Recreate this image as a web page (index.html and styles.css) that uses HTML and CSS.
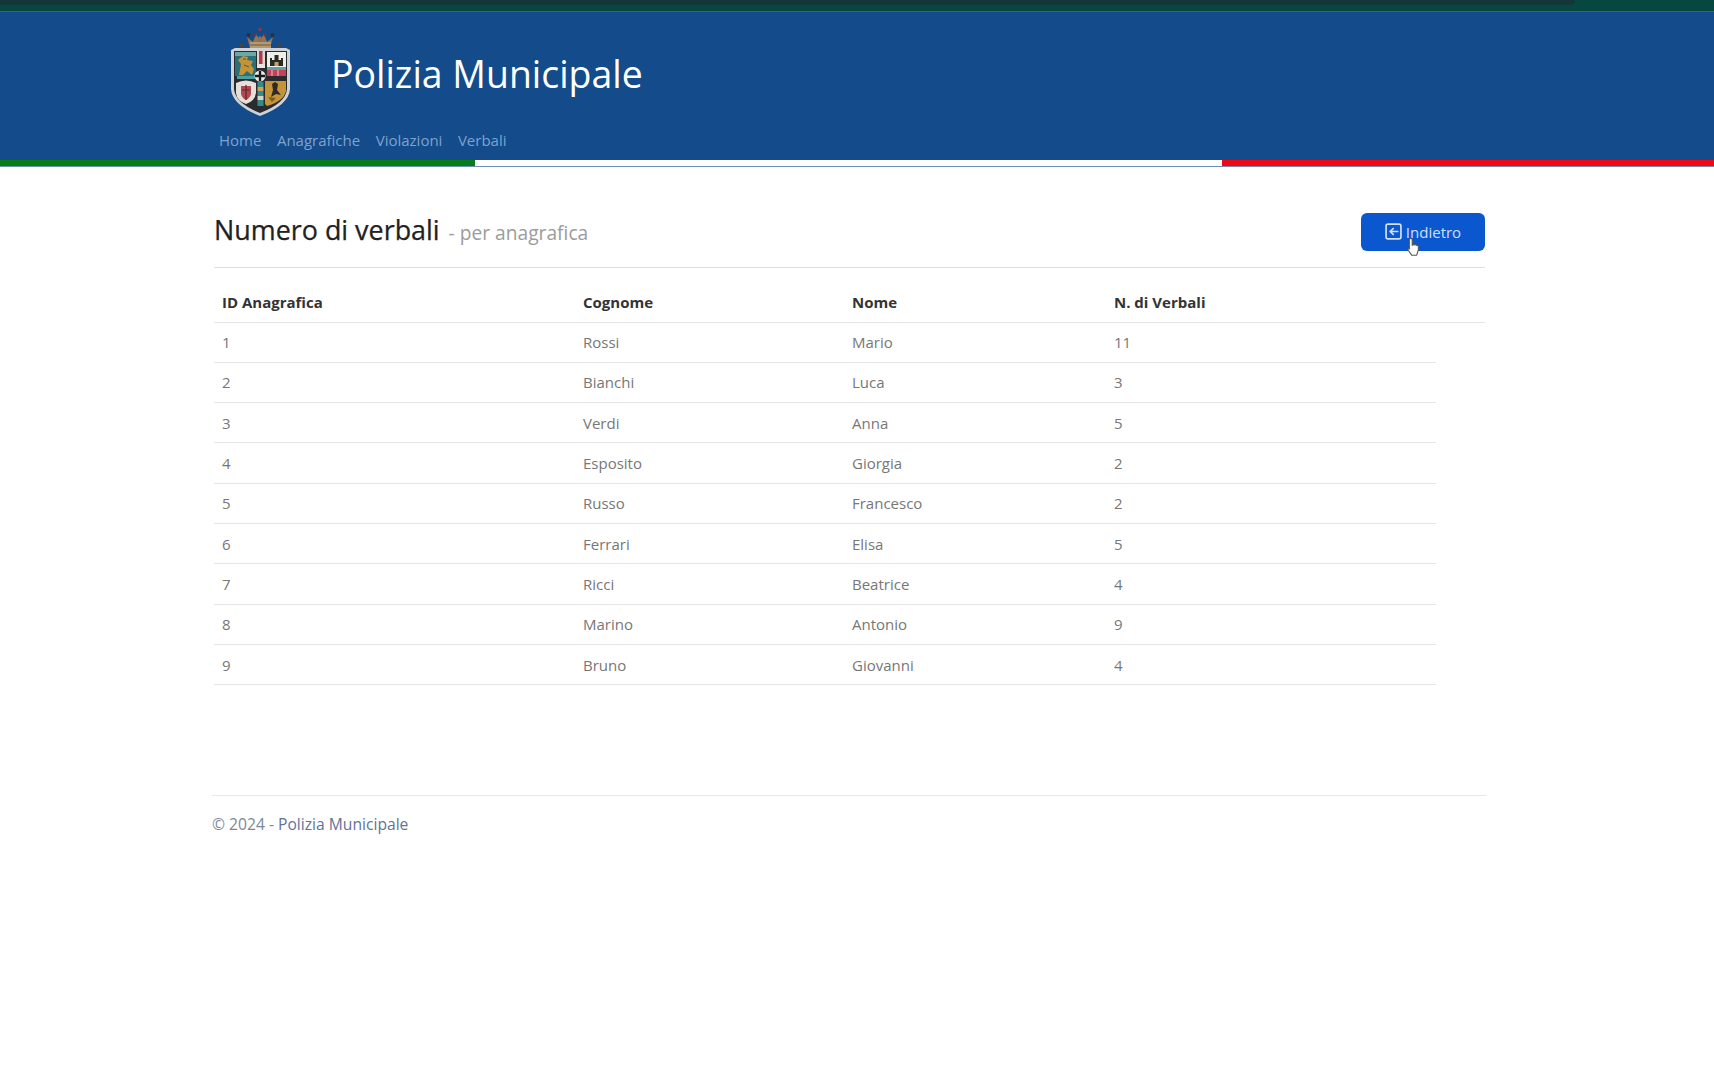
FILE: index.html
```html
<!DOCTYPE html>
<html lang="it">
<head>
<meta charset="utf-8">
<title>Polizia Municipale</title>
<link rel="stylesheet" href="styles.css">
</head>
<body>
<div class="browser-strip"><div class="strip-dark"></div></div>
<header class="site-header">
  <div class="brand">
    <svg class="crest" viewBox="20 5 62 90" width="62" height="90" aria-hidden="true">
      <!-- crown -->
      <path d="M40 27 L37 16 L43 21 L46 13 L50 19 L54 13 L57 21 L63 16 L60 27Z" fill="#8f7650"/>
      <path d="M48 18 Q50 12 52 18 L52 24 H48Z" fill="#8a6d62"/>
      <rect x="40" y="21" width="21" height="7" fill="#b59a70"/>
      <path d="M40 24 H61" stroke="#6e5a3e" stroke-width="1"/>
      <circle cx="50" cy="8.500" r="1.700" fill="#8c3a45"/>
      <circle cx="38.500" cy="14" r="2" fill="#2f3138"/><circle cx="62.500" cy="14" r="2" fill="#2f3138"/>
      <circle cx="45" cy="14" r="1.500" fill="#7d3040"/><circle cx="55" cy="14" r="1.500" fill="#7d3040"/>
      <circle cx="31.500" cy="24" r="2.200" fill="#47453f"/><circle cx="69" cy="24" r="2.200" fill="#47453f"/>
      <path d="M30 27 V30 M69 27 V30" stroke="#47453f" stroke-width="1.500"/>
      <!-- shield -->
      <path d="M21 29 L25 27 L76 27 L80 29 L80 68 Q79 84 50 95 Q22 84 21 68Z" fill="#cfd3d6"/>
      <path d="M24 30 L77 30 L77 68 Q76 82 50 92 Q25 82 24 68Z" fill="#2a2b2e"/>
      <!-- top-left: lion -->
      <rect x="25" y="31" width="21" height="24" fill="#2b6f78"/>
      <rect x="25" y="31" width="21" height="4" fill="#6aa7a8"/>
      <path d="M29 54 L31 43 L28 39 L33 35 L38 36 L37 39 L43 40 L41 44 L44 48 L42 54 L37 50 L33 54Z" fill="#c2943a"/>
      <path d="M33 38 L36 38 M34 44 L39 46" stroke="#6f5220" stroke-width="1"/>
      <!-- centre pale -->
      <rect x="47" y="30" width="8" height="17" fill="#dcd6d0"/><rect x="49" y="30" width="3.500" height="17" fill="#b23a48"/>
      <rect x="47" y="43" width="8" height="4" fill="#e8e4df"/>
      <!-- top-right: castle -->
      <rect x="57" y="31" width="19" height="15" fill="#efeee9"/>
      <path d="M60 45 V37 H62 V39 H64.500 V34 H68.500 V39 H71 V37 H73 V45Z" fill="#2b2a24"/>
      <rect x="64.500" y="41" width="4" height="4" fill="#b9a868"/>
      <rect x="57" y="46" width="19" height="3" fill="#5aa3a1"/>
      <rect x="57" y="49" width="19" height="6" fill="#c7405a"/>
      <path d="M62 49 V55 M68 49 V55" stroke="#e8c4c8" stroke-width="1"/>
      <!-- centre cross -->
      <rect x="27" y="55" width="18" height="3" fill="#49a0a0"/>
      <circle cx="50" cy="55" r="5.500" fill="#ecebe6"/><path d="M50 50 V60 M45 55 H55" stroke="#17191d" stroke-width="2.400"/>
      <!-- bottom-left shield -->
      <path d="M26 62 Q36 57 46 62 V72 Q45 80 36 83 Q27 80 26 72Z" fill="#e6e0da"/>
      <path d="M31 65 H41 V73 Q40 77 36 79 Q32 77 31 73Z" fill="#b04a50"/>
      <path d="M36 64 V79 M32 69 H40" stroke="#5a2a2c" stroke-width="1.200"/>
      <!-- bottom-right gold -->
      <path d="M55 60 H76 V70 Q74 80 57 85 L55 83Z" fill="#c4943a"/>
      <path d="M62 63 L65 61 L68 63 L67 69 L71 74 L66 73 L61 76 L63 69Z" fill="#2f2a20"/>
      <path d="M58 76 L66 77 L62 81Z" fill="#7e5a22"/>
      <!-- lower pale -->
      <rect x="47.500" y="61" width="6" height="5" fill="#38898c"/>
      <rect x="47.500" y="66" width="6" height="4" fill="#c9a552"/>
      <rect x="47.500" y="70" width="6" height="5" fill="#38898c"/>
      <rect x="47.500" y="75" width="6" height="4" fill="#d9d4c8"/>
      <rect x="47.500" y="79" width="6" height="6" fill="#38898c"/>
    </svg>
    <span class="brand-name">Polizia Municipale</span>
  </div>
  <nav class="main-nav">
    <a href="#">Home</a>
    <a href="#">Anagrafiche</a>
    <a href="#">Violazioni</a>
    <a href="#">Verbali</a>
  </nav>
</header>
<div class="tricolor"><span class="green"></span><span class="white"></span><span class="red"></span></div>

<main class="content">
  <div class="page-head">
    <h1>Numero di verbali <small>- per anagrafica</small></h1>
    <a class="btn" href="#">
      <svg class="btn-icon" viewBox="0 0 16 16" width="17" height="17" aria-hidden="true">
        <rect x="1" y="1" width="14" height="14" rx="1.800" fill="none" stroke="currentColor" stroke-width="1.600"/>
        <path d="M12 8H5M7.700 5.200 4.800 8l2.900 2.800" fill="none" stroke="currentColor" stroke-width="1.600" stroke-linecap="round" stroke-linejoin="round"/>
      </svg>
      <span>Indietro</span>
      <svg class="cursor" viewBox="0 0 16 22" width="15" height="20" aria-hidden="true">
        <path d="M5 1.500c1 0 1.600.7 1.600 1.600V9l1-.2c.4-.8 1.700-.7 2 .1.500-.6 1.700-.4 1.900.4.700-.3 1.700.1 1.800 1 .3 2.400.1 4.600-.8 6.500L11.500 20H6l-3.800-5.400c-.8-1.200.5-2.400 1.600-1.500l-.4-.3V3.100C3.400 2.200 4 1.500 5 1.500z" fill="#fff" stroke="#555" stroke-width="1.200" stroke-linejoin="round"/>
      </svg>
    </a>
  </div>

  <table class="data-table">
    <colgroup><col class="c1"><col class="c2"><col class="c3"><col class="c4"><col class="c5"></colgroup>
    <thead>
      <tr><th>ID Anagrafica</th><th>Cognome</th><th>Nome</th><th>N. di Verbali</th><th></th></tr>
    </thead>
    <tbody>
      <tr><td>1</td><td>Rossi</td><td>Mario</td><td>11</td></tr>
      <tr><td>2</td><td>Bianchi</td><td>Luca</td><td>3</td></tr>
      <tr><td>3</td><td>Verdi</td><td>Anna</td><td>5</td></tr>
      <tr><td>4</td><td>Esposito</td><td>Giorgia</td><td>2</td></tr>
      <tr><td>5</td><td>Russo</td><td>Francesco</td><td>2</td></tr>
      <tr><td>6</td><td>Ferrari</td><td>Elisa</td><td>5</td></tr>
      <tr><td>7</td><td>Ricci</td><td>Beatrice</td><td>4</td></tr>
      <tr><td>8</td><td>Marino</td><td>Antonio</td><td>9</td></tr>
      <tr><td>9</td><td>Bruno</td><td>Giovanni</td><td>4</td></tr>
    </tbody>
  </table>

  <footer class="site-footer">© 2024 - <span>Polizia Municipale</span></footer>
</main>
</body>
</html>
```

FILE: styles.css
```css
* { box-sizing: border-box; }
html, body { margin: 0; padding: 0; background: #fff; }
body {
  font-family: "Open Sans", "Noto Sans", "Liberation Sans", sans-serif;
  color: #666;
  font-size: 15px;
}
.browser-strip {
  height: 12px;
  background: #06483f;
  border-bottom: 1px solid #2a6a68;
}
.strip-dark {
  height: 5px;
  width: 1575px;
  background: #13363a;
  border-bottom-right-radius: 6px;
}
.site-header {
  background: #134b8b;
  height: 148px;
  padding: 14px 0 0 219px;
}
.brand { display: flex; align-items: center; height: 90px; padding-left: 11px; }
.crest { display: block; filter: blur(.4px); }
.brand-name {
  margin: 6px 0 0 39px;
  color: #fff;
  font-size: 37.400px;
  line-height: 1;
}
.main-nav { display: flex; gap: 15.500px; margin-top: 13px; }
.main-nav a { color: #7fa2cc; font-size: 15px; line-height: 22px; text-decoration: none; }
.tricolor { display: flex; height: 7px; border-bottom: 1px solid #6f8db5; }
.tricolor span { display: block; height: 6px; }
.tricolor .green { width: 475px; background: #067d18; }
.tricolor .white { width: 747px; background: #fff; }
.tricolor .red { flex: 1; background: #ee0a14; }

.content { width: 1274px; margin-left: 212px; padding-top: 46px; }
.page-head {
  display: flex;
  justify-content: space-between;
  align-items: center;
  margin: 0 1px 0 2px;
  height: 55px;
  padding-bottom: 17px;
  border-bottom: 1px solid #dedede;
}
h1 { margin: 0; font-size: 26.900px; font-weight: 400; color: #222; line-height: 38px; -webkit-text-stroke: .25px #222; }
h1 small { font-size: 19.200px; color: #9c9c9c; margin-left: 2px; -webkit-text-stroke: 0; }
.btn {
  position: relative;
  display: flex;
  align-items: center;
  justify-content: center;
  gap: 4px;
  width: 124px;
  height: 38px;
  background: #0b57d0;
  border-radius: 6px;
  color: #cfe0f8;
  font-size: 15px;
  text-decoration: none;
}
.cursor { position: absolute; left: 45px; top: 24px; }

.data-table {
  table-layout: fixed;
  border-collapse: collapse;
  width: 1271px;
  margin: 13px 0 0 2px;
}
.c1 { width: 361px; }
.c2 { width: 269px; }
.c3 { width: 262px; }
.c4 { width: 330px; }
.c5 { width: 49px; }
th, td { padding: 0 8px; text-align: left; border-bottom: 1px solid #e6e6e6; }
th { height: 41px; padding-top: 2px; font-weight: 700; color: #333; font-size: 15px; }
td { height: 40.300px; color: #777; font-size: 15px; }

.site-footer {
  margin-top: 110px;
  border-top: 1px solid #e8e8e8;
  padding-top: 16px;
  font-size: 15.650px;
  line-height: 24px;
  color: #7d8798;
}
.site-footer span { color: #62739a; }
```
